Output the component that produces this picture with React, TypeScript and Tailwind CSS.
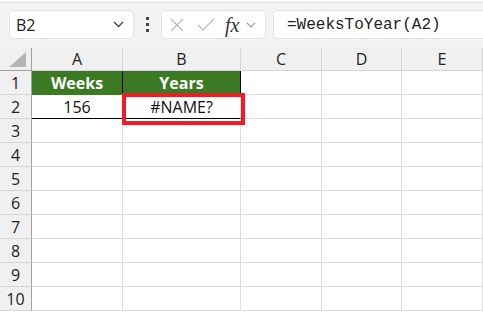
import React from "react";

const cols = ["A", "B", "C", "D", "E"];
const widths = ["w-[91px]", "w-[118px]", "w-[81px]", "w-[80px]", "w-[81px]"];
const rows = [1, 2, 3, 4, 5, 6, 7, 8, 9, 10];

function Toolbar() {
  return (
    <div className="h-[48px] bg-[#f3f3f3] relative">
      <div className="h-[3px] bg-[#fafafa] border-b border-[#e3e3e3]" />
      <div className="flex items-center pt-[7px] pl-[9px]">
        <div className="w-[125px] h-[29px] bg-white border border-[#e2e2e2] rounded-[5px] flex items-center justify-between pl-[6px] pr-[9px]">
          <span className="text-[16px] text-[#222]">B2</span>
          <svg width="11" height="7" viewBox="0 0 11 7">
            <path d="M1 1 L5.5 5.5 L10 1" stroke="#444" strokeWidth="1.3" fill="none" />
          </svg>
        </div>
        <div className="w-[27px] flex flex-col items-center gap-[3px]">
          <span className="w-[3px] h-[3px] bg-[#444]" />
          <span className="w-[3px] h-[3px] bg-[#444]" />
          <span className="w-[3px] h-[3px] bg-[#444]" />
        </div>
        <div className="w-[105px] h-[29px] bg-white border border-[#e2e2e2] rounded-[5px] flex items-center pl-[8px]">
          <svg width="14" height="14" viewBox="0 0 14 14">
            <path d="M1 1 L13 13 M13 1 L1 13" stroke="#b8b8b8" strokeWidth="1.2" />
          </svg>
          <svg width="18" height="14" viewBox="0 0 18 14" className="ml-[13px]">
            <path d="M1 7 L6 12 L17 1" stroke="#b8b8b8" strokeWidth="1.2" fill="none" />
          </svg>
          <span className="ml-[10px] text-[20px] italic text-[#333] font-['Liberation_Serif',serif] leading-none">fx</span>
          <svg width="10" height="6" viewBox="0 0 10 6" className="ml-[7px]">
            <path d="M1 1 L5 5 L9 1" stroke="#9a9a9a" strokeWidth="1.1" fill="none" />
          </svg>
        </div>
        <div className="ml-[7px] flex-1 h-[29px] bg-white border border-[#e2e2e2] border-r-0 rounded-l-[5px] flex items-center pl-[13px]">
          <span className="text-[16px] text-[#222] font-['Liberation_Mono',monospace]">=WeeksToYear(A2)</span>
        </div>
      </div>
    </div>
  );
}

export default function App() {
  return (
    <div className="w-[483px] h-[312px] overflow-hidden bg-white font-['Open_Sans','Liberation_Sans',sans-serif]">
      <Toolbar />
      <div className="relative">
        <div className="flex h-[23px] bg-[#f0f0f0]">
          <div className="w-[32px] border-r border-b border-[#9f9f9f] relative">
            <svg width="18" height="15" viewBox="0 0 18 15" className="absolute right-[4px] bottom-[3px]">
              <polygon points="17,0 17,15 0,15" fill="#b5b5b5" />
            </svg>
          </div>
          {cols.map((c, i) => (
            <div
              key={c}
              className={`${widths[i]} border-r border-b border-[#d5d5d5] flex items-center justify-center text-[16px] text-[#222]`}
            >
              {c}
            </div>
          ))}
        </div>
        {rows.map((r) => (
          <div key={r} className="flex h-[24px]">
            <div className="w-[32px] bg-[#f0f0f0] border-r border-b border-r-[#9f9f9f] border-b-[#d5d5d5] flex items-center justify-center text-[16px] text-[#222]">
              {r}
            </div>
            {cols.map((c, i) => {
              let cls = "border-r border-b border-[#dedede]";
              let content: React.ReactNode = null;
              if (r === 1 && i < 2) {
                cls = "bg-[#3b7a22] border-r border-b border-r-black border-b-[#3b7a22] text-white font-bold";
                content = i === 0 ? "Weeks" : "Years";
              } else if (r === 2 && i < 2) {
                cls = "border-r border-b border-r-[#dedede] border-b-black text-[#111]";
                content = i === 0 ? "156" : "#NAME?";
              }
              return (
                <div
                  key={c}
                  className={`${widths[i]} ${cls} flex items-center justify-center text-[16px]`}
                >
                  {content}
                </div>
              );
            })}
          </div>
        ))}
        <div className="absolute left-[122px] top-[45px] w-[123px] h-[32px] border-[4px] border-[#ee1c25]" />
      </div>
    </div>
  );
}
